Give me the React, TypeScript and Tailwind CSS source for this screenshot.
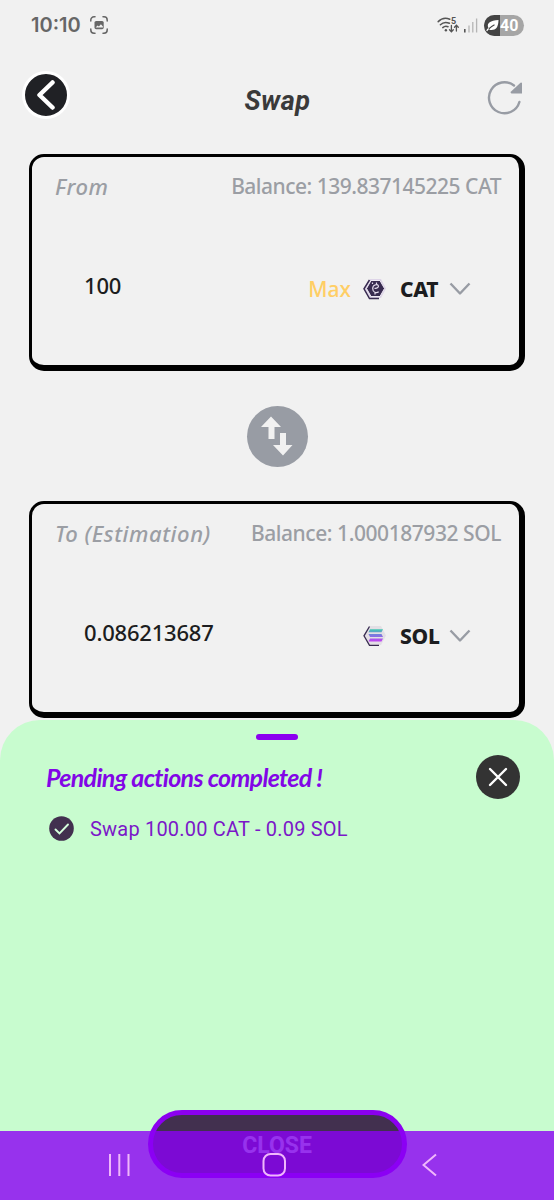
import type { ReactNode } from "react";

interface SwapCardProps {
	label: string;
	balance: string;
	amount: string;
	symbol: string;
	icon: ReactNode;
	showMax?: boolean;
	balanceClass: string;
}

function StatusBar() {
	return (
		<div className="flex h-[50px] items-center justify-between pl-[31px] pr-[30px]">
			<div className="flex items-center gap-[9px]">
				<span className="font-['Inter'] text-[20px] font-semibold leading-none text-[#666]">
					10:10
				</span>
				<svg width="18" height="18" viewBox="0 0 18 18" fill="none">
					<path
						d="M.8 5V4A3.2 3.2 0 0 1 4 .8h1M13 .8h1A3.2 3.2 0 0 1 17.200 4v1M17.200 13v1a3.200 3.200 0 0 1-3.200 3.200h-1M5 17.200H4A3.200 3.200 0 0 1 .8 14v-1"
						stroke="#666"
						strokeWidth="1.500"
						strokeLinecap="round"
					/>
					<rect x="4.500" y="5" width="9.200" height="8.200" rx="1.600" fill="#666" />
					<path d="m5.600 11.500 2-2 1.300 1 2-2.200 2 2.200v1z" fill="#f1f1f1" />
				</svg>
			</div>
			<div className="flex items-center">
				<svg width="42" height="18" viewBox="0 0 42 18" fill="none">
					<g stroke="#555" strokeWidth="1.500" strokeLinecap="round">
						<path d="M1.200 5.600C4.500 2.300 9 1.700 12.800 3.300M3.400 8.800c2.300-2.300 5.600-3 9-1.500M5.800 11.600c1.500-1.400 3.400-1.700 5.200-.9" />
						<path d="M14.400 9.500v6M12.500 13.700l1.900 2 1.900-2M19.400 15v-5.500M17.500 11.300l1.900-2 1.900 2" strokeWidth="1.300" />
					</g>
					<circle cx="8.900" cy="14.300" r="1.200" fill="#555" />
					<text x="14" y="7.700" fontSize="9" fontWeight="700" fontFamily="Roboto, sans-serif" fill="#555">
						5
					</text>
					<rect x="27" y="13" width="1.600" height="3.500" fill="#555" />
					<path d="M32 9.500v7M35.800 6v10.500M39.600 2.500v14" stroke="#b5b5b5" strokeWidth="1.300" />
				</svg>
				<div className="ml-[5px] flex h-[21px] w-[40px] items-center overflow-hidden rounded-full bg-[#a6a6a6]">
					<div className="flex h-full w-[16px] items-center justify-center bg-[#444]">
						<svg className="ml-[1px]" width="13" height="13" viewBox="0 0 13 13">
							<path d="M2 8C1 4 4 1.500 12.500 1c-.2 7-2.500 10-7 10-1 0-1.700-.3-2.200-.6z" fill="#fff" />
							<path d="M2.500 10.200C4 8.500 6 7 8.500 5.700" stroke="#444" strokeWidth="1.200" fill="none" />
							<path d="M.7 11.800c.6-.9 1.300-1.700 2-2.300" stroke="#fff" strokeWidth="1.200" />
						</svg>
					</div>
					<span className="pt-[1px] font-['Roboto'] text-[16px] font-bold leading-none text-white">
						40
					</span>
				</div>
			</div>
		</div>
	);
}

function Header() {
	return (
		<header className="flex h-[104px] items-start justify-between pl-[22px] pr-[30px] pt-[21px]">
			<button className="flex size-[48px] items-center justify-center rounded-full border-[3px] border-white bg-[#202125]">
				<svg width="18" height="30" viewBox="0 0 18 30" fill="none">
					<path d="M15.500 2.500 2.500 15l13 12.500" stroke="#fff" strokeWidth="4.500" strokeLinecap="round" strokeLinejoin="round" />
				</svg>
			</button>
			<h1 className="ml-[2px] mt-[14px] font-['Roboto'] text-[27px] font-bold italic leading-8 tracking-[0.500px] text-[#3a3a3a]">
				Swap
			</h1>
			<svg className="mt-[8px] -mr-[1px]" width="42" height="38" viewBox="0 0 42 38" fill="none">
				<path d="M31 6.500A15.500 15.500 0 1 0 36.400 23" stroke="#989ca4" strokeWidth="2.400" strokeLinecap="round" />
				<path d="M39 4v10.500H28.500q-1.500-.4-.7-1.700L37.500 3.800Q38.500 3.200 39 4Z" fill="#989ca4" />
			</svg>
		</header>
	);
}

function CatIcon() {
	return (
		<svg width="24" height="24" viewBox="0 0 24 24">
			<path d="M7 2h11l5 9.500-5 9.500H7L1 11.500z" fill="#ded5e8" />
			<path d="M6.500 3 1 11.800 6.500 21.500H16" fill="none" stroke="#382b50" strokeWidth="1.500" />
			<path d="M8 3.500h9l4.500 8L17 19.500H8L3.500 11.500z" fill="#382b50" stroke="#efeaf5" strokeWidth="1" />
			<path d="M15.500 8.700C14 7 9.700 7.500 9.700 11.500s3.700 5 6 3.200M11.500 11.300c2.500.3 4-.7 4-2.500M9.500 7V5.500M13.500 7V5.500M12 15.500v2" fill="none" stroke="#e6deef" strokeWidth="1.200" />
		</svg>
	);
}

function SolIcon() {
	return (
		<svg width="24" height="24" viewBox="0 0 24 24">
			<defs>
				<linearGradient id="sol" x1="0" y1="5" x2="0" y2="17" gradientUnits="userSpaceOnUse">
					<stop offset="0" stopColor="#3fcdae" />
					<stop offset=".5" stopColor="#7a79df" />
					<stop offset="1" stopColor="#bf45f2" />
				</linearGradient>
			</defs>
			<path d="M7 2h11l5 9.500-5 9.500H7L1 11.500z" fill="#e3dfe5" />
			<path d="M6.500 2.500 1 11.800 6.500 21.300H16" fill="none" stroke="#382b50" strokeWidth="1.300" />
			<path d="M7 5.300h13L18.500 8.300h-13zM5.500 9.900h13l1.500 3H7zM7 14.500h13l-1.500 3h-13z" fill="url(#sol)" />
		</svg>
	);
}

function SwapCard({ label, balance, amount, symbol, icon, showMax, balanceClass }: SwapCardProps) {
	return (
		<section className="mx-[29px] h-[217px] rounded-[15px] border-b-[6px] border-l-[3px] border-r-[6px] border-t-[3px] border-black font-['Noto_Sans']">
			<div className="flex items-center justify-between whitespace-nowrap pl-[23px] pr-[18px] pt-[13px] text-[#9b9ea4]">
				<span className="-mt-[1px] text-[22px] font-medium italic leading-8 tracking-[0.550px]">
					{label}
				</span>
				<span className={`${balanceClass} text-[21px] font-medium leading-8`}>
					{balance}
				</span>
			</div>
			<div className="flex pl-[52px] pr-[48px] pt-[67px]">
				<span className="flex-1 text-[22px] font-medium leading-8 tracking-[-0.200px] text-[#1c1d20]">
					{amount}
				</span>
				<div className="flex items-center pt-[4px] leading-8">
					{showMax && (
						<span className="mr-[12px] text-[21px] font-medium text-[#ffce65]">Max</span>
					)}
					{icon}
					<span className="ml-[13px] w-[40px] text-[21px] font-extrabold tracking-[-0.300px] text-[#1c1d20]">
						{symbol}
					</span>
					<svg className="ml-[9px]" width="22" height="14" viewBox="0 0 22 14" fill="none">
						<path d="m1.500 1.500 9.500 10 9.500-10" stroke="#989ca4" strokeWidth="2.400" strokeLinejoin="round" />
					</svg>
				</div>
			</div>
		</section>
	);
}

function PendingSheet() {
	return (
		<section className="flex flex-1 flex-col items-center rounded-t-[40px] bg-[#c8fccf] pt-[14px]">
			<div className="h-[6px] w-[42px] rounded-full bg-[#8b00ef]" />
			<div className="flex w-full justify-between pl-[46px] pr-[34px] pt-[15px]">
				<h2 className="whitespace-nowrap font-['Lato'] text-[25px] font-bold italic leading-[44px] tracking-[-0.690px] text-[#8206e6]">
					Pending actions completed !
				</h2>
				<button className="flex size-[44px] items-center justify-center rounded-full bg-[#333]">
					<svg width="20" height="20" viewBox="0 0 20 20">
						<path d="m2 2 16 16M18 2 2 18" stroke="#fff" strokeWidth="2.400" strokeLinecap="round" />
					</svg>
				</button>
			</div>
			<div className="flex w-full items-center gap-4 pl-[49px] pt-[14px]">
				<svg className="-mt-[2px]" width="25" height="25" viewBox="0 0 25 25" fill="none">
					<circle cx="12.500" cy="12.500" r="12.300" fill="#42304f" />
					<path d="m6.500 13.500 4 4L19 8.500" stroke="#d5ffdc" strokeWidth="1.900" strokeLinecap="round" />
				</svg>
				<span className="font-['Roboto'] text-[20px] leading-8 tracking-[0.200px] text-[#7b17c8]">
					Swap 100.00 CAT - 0.09 SOL
				</span>
			</div>
			<button className="mb-[22px] mt-auto h-[68px] w-[259px] rounded-full border-[5px] border-[#8b00ef] bg-[#42304f] pt-[4px] font-['Roboto'] text-[23px] font-bold text-[#c8fccf]">
				CLOSE
			</button>
		</section>
	);
}

function NavBar() {
	return (
		<nav className="absolute inset-x-0 bottom-0 flex h-[69px] items-center bg-[#8b00f5]/80 pb-[2px] pl-[108px]">
			<svg width="23" height="24" viewBox="0 0 23 24" stroke="#f0b7fb" strokeWidth="2">
				<path d="M2 1v22M11.300 1v22M20.500 1v22" />
			</svg>
			<svg className="ml-[131px]" width="25" height="24" viewBox="0 0 25 24" fill="none">
				<rect x="1.500" y="1" width="21.500" height="21.500" rx="7" stroke="#f0b7fb" strokeWidth="2" />
			</svg>
			<svg className="ml-[135px]" width="16" height="24" viewBox="0 0 16 24" fill="none">
				<path d="M14 1.500 1.500 12 14 22.500" stroke="#f0b7fb" strokeWidth="2" />
			</svg>
		</nav>
	);
}

function App() {
	return (
		<main className="relative flex h-[1200px] w-[554px] flex-col overflow-hidden bg-[#f1f1f1]">
			<StatusBar />
			<Header />
			<SwapCard
				label="From"
				balance="Balance: 139.837145225 CAT"
				amount="100"
				symbol="CAT"
				icon={<CatIcon />}
				showMax
				balanceClass="tracking-[-0.500px]"
			/>
			<div className="flex h-[130px] items-center justify-center">
				<button className="flex size-[61px] items-center justify-center rounded-full bg-[#989ca4]">
					<svg width="34" height="42" viewBox="0 0 34 42" fill="#f1f1f1">
						<path d="M11 1.500 21 12h-6.500v12h-6V12H1zM20 18h6v12h6.500L23 40.500 13 30h7z" />
					</svg>
				</button>
			</div>
			<SwapCard
				label="To (Estimation)"
				balance="Balance: 1.000187932 SOL"
				amount="0.086213687"
				symbol="SOL"
				icon={<SolIcon />}
				balanceClass="tracking-[-0.440px]"
			/>
			<div className="h-[2px]" />
			<PendingSheet />
			<NavBar />
		</main>
	);
}

export default App;
